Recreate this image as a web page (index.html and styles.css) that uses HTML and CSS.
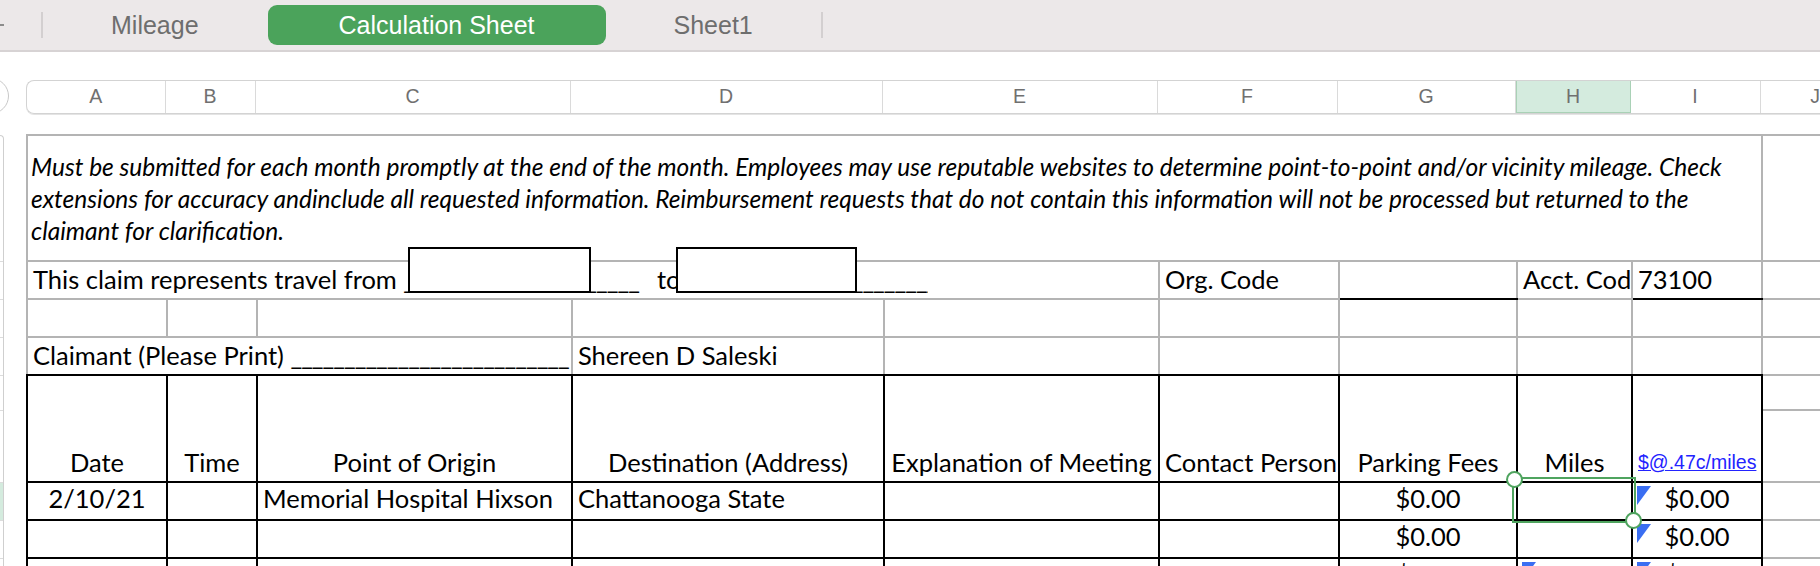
FILE: index.html
```html
<!DOCTYPE html>
<html lang="en">
<head>
    <meta charset="UTF-8">
    <title>Mileage – Calculation Sheet</title>
    <link rel="stylesheet" href="styles.css">
</head>
<body>
    <!-- Sheet tabs -->
    <div class="tabbar">
        <span class="tab-add"></span>
        <span class="tab-sep"></span>
        <a href="#" class="tab">Mileage</a>
        <a href="#" class="tab selected">Calculation Sheet</a>
        <a href="#" class="tab">Sheet1</a>
        <span class="tab-sep"></span>
    </div>

    <div class="workspace">
        <div class="corner"><span></span></div>

        <!-- Column letters -->
        <div class="col-heads">
            <div class="ch w-a">A</div>
            <div class="ch w-b">B</div>
            <div class="ch w-c">C</div>
            <div class="ch w-d">D</div>
            <div class="ch w-e">E</div>
            <div class="ch w-f">F</div>
            <div class="ch w-g">G</div>
            <div class="ch w-h active">H</div>
            <div class="ch w-i">I</div>
            <div class="ch w-j">J</div>
        </div>

        <!-- Row numbers (mostly scrolled out of view) -->
        <div class="row-heads">
            <div class="rh h-note"></div>
            <div class="rh h-row"></div>
            <div class="rh h-row"></div>
            <div class="rh h-row"></div>
            <div class="rh h-head-a"></div>
            <div class="rh h-head-b"></div>
            <div class="rh h-row active"></div>
            <div class="rh h-row"></div>
            <div class="rh h-row"></div>
        </div>

        <div class="sheet-wrap">
            <table class="sheet">
                <colgroup>
                    <col class="w-a"><col class="w-b"><col class="w-c"><col class="w-d"><col class="w-e">
                    <col class="w-f"><col class="w-g"><col class="w-h"><col class="w-i"><col class="w-j">
                </colgroup>
                <tr class="r-note">
                    <td colspan="9" class="note">Must be submitted for each month promptly at the end of the month. Employees may use reputable websites to determine point-to-point and/or vicinity mileage. Check<br>extensions for accuracy andinclude all requested information. Reimbursement requests that do not contain this information will not be processed but returned to the<br>claimant for clarification.</td>
                    <td class="out"></td>
                </tr>
                <tr class="r-row">
                    <td colspan="5">This claim represents travel from <span class="blank blank-from">______________________</span> to<span class="blank blank-to">________________________</span></td>
                    <td>Org. Code</td>
                    <td class="ul"></td>
                    <td>Acct. Code</td>
                    <td class="ul">73100</td>
                    <td class="out"></td>
                </tr>
                <tr class="r-row">
                    <td></td><td></td><td></td><td></td><td></td><td></td>
                    <td class="ol"></td><td></td><td class="ol"></td>
                    <td class="out"></td>
                </tr>
                <tr class="r-row rule">
                    <td colspan="3">Claimant (Please Print) <span class="blank blank-name">__________________________</span></td>
                    <td>Shereen D Saleski</td>
                    <td></td><td></td><td></td><td></td><td></td>
                    <td class="out"></td>
                </tr>
                <tr class="r-head-a grid">
                    <td rowspan="2" class="c">Date</td>
                    <td rowspan="2" class="c">Time</td>
                    <td rowspan="2" class="c">Point of Origin</td>
                    <td rowspan="2" class="c">Destination (Address)</td>
                    <td rowspan="2" class="c">Explanation of Meeting</td>
                    <td rowspan="2" class="c">Contact Person</td>
                    <td rowspan="2" class="c">Parking Fees</td>
                    <td rowspan="2" class="c">Miles</td>
                    <td rowspan="2" class="c"><a href="#" class="rate">$@.47c/miles</a></td>
                    <td class="out"></td>
                </tr>
                <tr class="r-head-b grid">
                    <td class="out"></td>
                </tr>
                <tr class="r-row grid data">
                    <td class="c">2/10/21</td>
                    <td></td>
                    <td>Memorial Hospital Hixson</td>
                    <td>Chattanooga State</td>
                    <td></td><td></td>
                    <td class="c">$0.00</td>
                    <td></td>
                    <td class="c flagged"><span class="flag"></span>$0.00</td>
                    <td class="out"></td>
                </tr>
                <tr class="r-row grid data">
                    <td></td><td></td><td></td><td></td><td></td><td></td>
                    <td class="c">$0.00</td>
                    <td></td>
                    <td class="c flagged"><span class="flag"></span>$0.00</td>
                    <td class="out"></td>
                </tr>
                <tr class="r-row grid data">
                    <td></td><td></td><td></td><td></td><td></td><td></td>
                    <td class="c">$0.00</td>
                    <td class="flagged"><span class="flag"></span></td>
                    <td class="c flagged"><span class="flag"></span>$0.00</td>
                    <td class="out"></td>
                </tr>
            </table>

            <!-- floating text boxes and the cell selection sit over the grid -->
            <div class="textbox box-from"></div>
            <div class="textbox box-to"></div>
            <div class="selection"></div>
        </div>
    </div>
</body>
</html>
```

FILE: styles.css
```css
* {
    box-sizing: border-box;
}
body {
    margin: 0;
    width: 1820px;
    height: 566px;
    overflow: hidden;
    background: #fff;
    font-family: Lato, 'Open Sans', sans-serif;
}

/* tabs */
.tabbar {
    display: flex;
    align-items: center;
    height: 52px;
    background: #ece8e9;
    border-bottom: 2px solid #d7d3d4;
}
.tab-add {
    width: 4px;
    height: 2px;
    background: #8c8c8c;
    margin-right: 37px;
}
.tab-sep {
    width: 2px;
    height: 26px;
    background: #d3cfd0;
}
.tab {
    display: block;
    height: 40px;
    line-height: 40px;
    padding: 0 68px;
    border-radius: 9px;
    font-family: 'Liberation Sans', Arial, sans-serif;
    font-size: 25px;
    color: #6e6e6e;
    text-decoration: none;
}
.tab.selected {
    margin-left: 1px;
    padding: 0 71px;
    background: #4ba35b;
    color: #fff;
}

/* column widths, shared by letters and grid */
.w-a { width: 140px; }
.w-b { width: 90px; }
.w-c { width: 315px; }
.w-d { width: 312px; }
.w-e { width: 275px; }
.w-f { width: 180px; }
.w-g { width: 178px; }
.w-h { width: 115px; }
.w-i { width: 130px; }
.w-j { width: 110px; }

.workspace {
    display: grid;
    grid-template-columns: 9px auto;
    grid-template-rows: 34px auto;
    column-gap: 17px;
    row-gap: 20px;
    padding-top: 28px;
}
.corner {
    width: 9px;
    height: 36px;
    margin-top: -2px;
    overflow: hidden;
}
.corner span {
    display: block;
    width: 36px;
    height: 36px;
    margin-left: -27px;
    border: 1.5px solid #c8c8c8;
    border-radius: 50%;
}

.col-heads {
    display: flex;
    height: 34px;
    border: 1.5px solid #d3d3d3;
    border-right: none;
    border-radius: 8px 0 0 8px;
    box-shadow: 0 1px 0 #e4e4e4;
}
.ch {
    flex: none;
    border-right: 1px solid #dadada;
    text-align: center;
    line-height: 31px;
    font-family: 'Liberation Sans', Arial, sans-serif;
    font-size: 19.5px;
    color: #707070;
}
.ch.w-a {
    width: 138.5px;
}
.ch.active {
    background: #d4ebde;
    border-left: 1px solid #a9d1b6;
    border-right: 1px solid #a9d1b6;
    border-bottom: 1px solid #a9d1b6;
}

.row-heads {
    width: 4px;
    display: flex;
    flex-direction: column;
    margin-top: 1px;
    border-top: 1px solid #cfcfcf;
    border-right: 1px solid #cfcfcf;
    border-top-right-radius: 4px;
}
.rh {
    border-bottom: 1px solid #dcdcdc;
}
.rh.active {
    background: #d4ebde;
}
.h-note { height: 126px; }
.h-row { height: 38px; }
.h-head-a { height: 35px; }
.h-head-b { height: 72px; }

/* the sheet */
.sheet-wrap {
    position: relative;
}
.sheet {
    border-collapse: collapse;
    table-layout: fixed;
    width: 1845px;
    font-size: 25.5px;
    color: #000;
}
.sheet td {
    border: 2px solid #b4b4b4;
    padding: 0 5px 5px;
    line-height: 28px;
    vertical-align: bottom;
    white-space: nowrap;
    overflow: hidden;
}
.sheet tr.data td {
    padding-bottom: 7px;
}
.r-note { height: 126px; }
.r-row { height: 38px; }
.r-head-a { height: 35px; }
.r-head-b { height: 72px; }

.sheet td.note {
    vertical-align: middle;
    padding: 2px 3px 0;
    font-style: italic;
    font-size: 24.5px;
    line-height: 32px;
}
.sheet td.ul {
    border-bottom-color: #000;
}
.sheet td.ol {
    border-top-color: #000;
}
.sheet tr.rule td {
    border-bottom-color: #000;
}
.sheet tr.grid td {
    border-color: #000;
}
.sheet tr td.out,
.sheet tr.grid td.out {
    border-color: #b4b4b4;
}
.sheet tr.grid td.out {
    border-left-color: #000;
}
.sheet td.c {
    text-align: center;
}
.blank {
    display: inline-block;
    overflow: hidden;
    vertical-align: bottom;
    letter-spacing: -1px;
}
.blank-from { width: 247px; }
.blank-to { width: 248px; }
.blank-name { width: 290px; }

.rate {
    font-family: 'Liberation Sans', Arial, sans-serif;
    font-size: 19.5px;
    color: #2323ff;
}
.flagged {
    position: relative;
}
.flag {
    position: absolute;
    top: 3px;
    left: 4px;
    width: 0;
    height: 0;
    border-top: 19px solid #3a6ef2;
    border-right: 14px solid transparent;
}

.textbox {
    position: absolute;
    top: 113px;
    height: 46px;
    border: 2.5px solid #000;
    background: #fff;
}
.box-from {
    left: 382px;
    width: 183px;
}
.box-to {
    left: 650px;
    width: 181px;
}

.selection {
    position: absolute;
    left: 1486px;
    top: 343px;
    width: 124px;
    height: 46px;
    border: 2px solid #4fa45f;
}
.selection::before,
.selection::after {
    content: '';
    position: absolute;
    width: 13px;
    height: 13px;
    border: 2px solid #4fa45f;
    border-radius: 50%;
    background: #fff;
}
.selection::before {
    left: -8px;
    top: -8px;
}
.selection::after {
    right: -8px;
    bottom: -8px;
}
```
